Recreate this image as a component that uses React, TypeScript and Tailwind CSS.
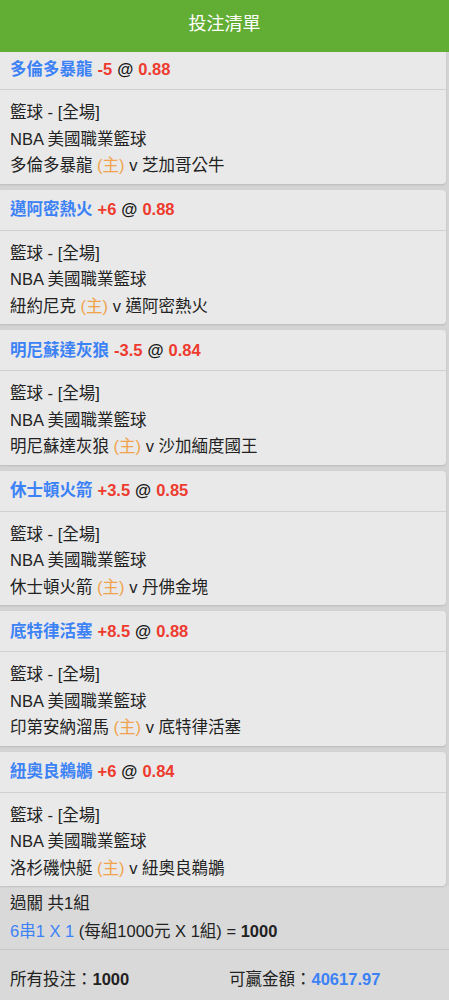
const bets = [
  { team: "多倫多暴龍", line: "-5", odds: "0.88", home: "多倫多暴龍", away: "芝加哥公牛" },
  { team: "邁阿密熱火", line: "+6", odds: "0.88", home: "紐約尼克", away: "邁阿密熱火" },
  { team: "明尼蘇達灰狼", line: "-3.5", odds: "0.84", home: "明尼蘇達灰狼", away: "沙加緬度國王" },
  { team: "休士頓火箭", line: "+3.5", odds: "0.85", home: "休士頓火箭", away: "丹佛金塊" },
  { team: "底特律活塞", line: "+8.5", odds: "0.88", home: "印第安納溜馬", away: "底特律活塞" },
  { team: "紐奧良鵜鶘", line: "+6", odds: "0.84", home: "洛杉磯快艇", away: "紐奧良鵜鶘" },
];

type Bet = (typeof bets)[number];

function BetCard({ bet }: { bet: Bet }) {
  return (
    <div className="mr-[3px] rounded-r-[4px] bg-[#e9e9e9] shadow-[0_1px_2px_rgba(0,0,0,0.12)]">
      <div className="flex h-[41px] items-center border-b border-[#d0d0d0] px-[10px] text-[16.5px] font-bold">
        <span className="text-[#3c82f6]">{bet.team}</span>
        <span className="ml-[5px] text-[#ee3b2f]">{bet.line}</span>
        <span className="mx-[5px] text-[#1a1a1a]">@</span>
        <span className="text-[#ee3b2f]">{bet.odds}</span>
      </div>
      <div className="px-[10px] pb-[5px] pt-[9px] text-[16.5px] leading-[26.5px] text-[#222]">
        <div>籃球 - [全場]</div>
        <div>NBA 美國職業籃球</div>
        <div>
          {bet.home} <span className="text-[#f0a34c]">(主)</span> v {bet.away}
        </div>
      </div>
    </div>
  );
}

export default function App() {
  return (
    <div
      className="min-h-screen bg-[#d4d4d4]"
      style={{ fontFamily: '"Liberation Sans", "Noto Sans CJK TC", sans-serif' }}
    >
      <header className="relative z-10 flex h-[52px] items-center justify-center bg-[#62ad34] pb-[4px] text-[18px] text-white">
        投注清單
      </header>

      <main className="-mt-[3px] flex flex-col gap-[6px]">
        {bets.map((bet) => (
          <BetCard bet={bet} key={bet.team} />
        ))}
      </main>

      <section className="bg-[#d9d9d9] text-[16.5px] text-[#222]">
        <div className="border-b border-[#c8c8c8] px-[10px] pb-[4px] pt-[3px] leading-[28px]">
          <div>過關 共1組</div>
          <div>
            <span className="text-[#3c82f6]">6串1 X 1</span> (每組1000元 X 1組) ={" "}
            <span className="font-bold">1000</span>
          </div>
        </div>
        <div className="flex h-[58px] items-center px-[10px]">
          <div className="w-[219px]">
            所有投注：<span className="font-bold">1000</span>
          </div>
          <div>
            可贏金額：<span className="font-bold text-[#3c82f6]">40617.97</span>
          </div>
        </div>
      </section>
    </div>
  );
}
